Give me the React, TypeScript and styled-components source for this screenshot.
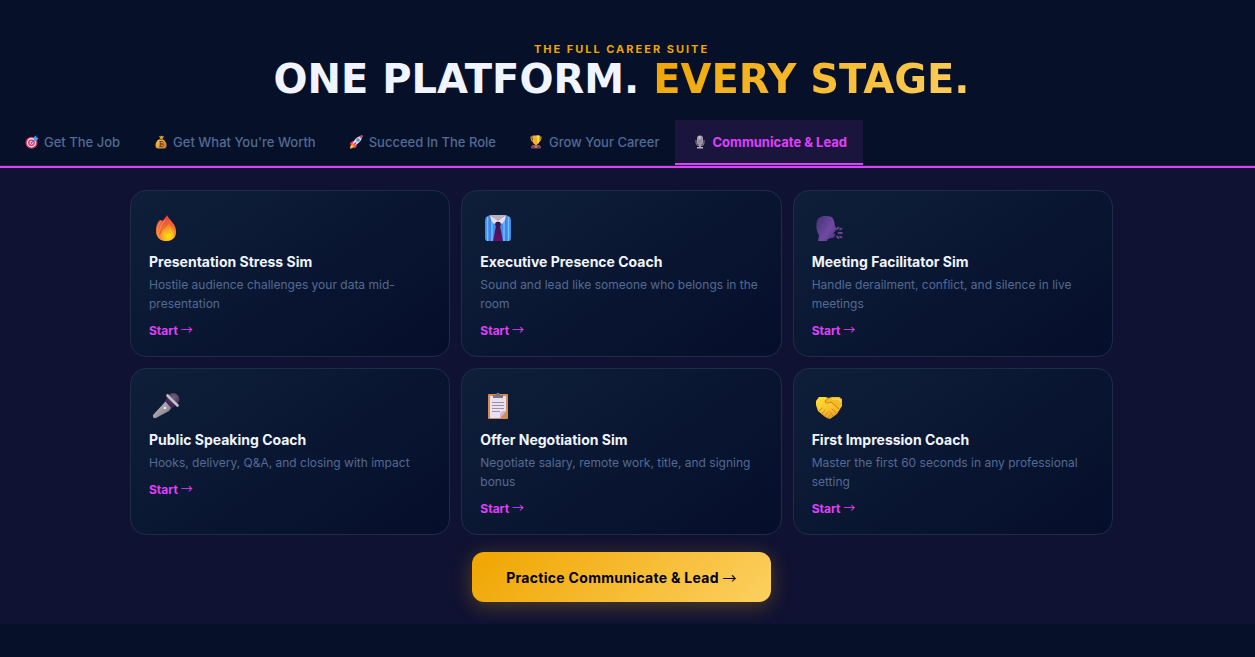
import React, { useState } from "react";
import styled, { createGlobalStyle } from "styled-components";

const GlobalStyle = createGlobalStyle`
  *, *::before, *::after { box-sizing: border-box; }
  body {
    margin: 0;
    background: #061029;
    font-family: Inter, "Liberation Sans", sans-serif;
    color: #f0f4ff;
  }
`;

const Page = styled.main`
  min-height: 100vh;
  padding-bottom: 33px;
`;

const Header = styled.header`
  padding: 42px 12px 0 0;
  text-align: center;
`;

const Eyebrow = styled.p`
  margin: 0;
  font-size: 11px;
  line-height: 14px;
  font-weight: 700;
  letter-spacing: 2px;
  text-transform: uppercase;
  color: #f0a500;
`;

const Heading = styled.h2`
  margin: 0 0 18px;
  font-family: "DejaVu Sans", sans-serif;
  font-size: 40px;
  line-height: 46px;
  font-weight: 700;
  text-transform: uppercase;
  color: #f0f4ff;
`;

const Gold = styled.span`
  background: linear-gradient(135deg, #f0a500, #fcd060);
  background-clip: text;
  -webkit-background-clip: text;
  color: transparent;
`;

const TabBar = styled.nav`
  display: flex;
  padding-left: 7px;
  border-bottom: 1px solid #182543;
`;

const Tab = styled.button<{ $active: boolean }>`
  display: flex;
  align-items: center;
  gap: 4px;
  height: 45px;
  padding: 0 16px;
  border: 0;
  border-bottom: 2px solid ${(p) => (p.$active ? "#e040fb" : "transparent")};
  background: ${(p) => (p.$active ? "#19153c" : "transparent")};
  color: ${(p) => (p.$active ? "#e040fb" : "#526a94")};
  font-family: inherit;
  font-size: 13px;
  line-height: 16px;
  font-weight: ${(p) => (p.$active ? 700 : 500)};
  white-space: nowrap;
  cursor: pointer;
`;

const TabIcon = styled.span`
  display: flex;
  justify-content: center;
  width: 17px;
`;

const Panel = styled.section`
  display: flex;
  flex-direction: column;
  align-items: center;
  gap: 17px;
  padding: 22px 12px 22px 0;
  border-top: 2px solid #e040fb;
  background: #101233;
`;

const Grid = styled.div`
  display: grid;
  grid-template-columns: repeat(3, 1fr);
  gap: 11px;
  width: 100%;
  max-width: 983px;
`;

const Card = styled.article`
  padding: 18px;
  border: 1px solid #1f2c48;
  border-radius: 16px;
  background: linear-gradient(145deg, #0f1f39, #050e2a);
`;

const CardIcon = styled.div`
  display: flex;
  align-items: center;
  justify-content: center;
  width: 35px;
  height: 38px;
  margin-bottom: 6px;
`;

const CardTitle = styled.h3`
  margin: 0 0 4px;
  font-size: 14px;
  line-height: 18px;
  font-weight: 700;
  color: #f0f4ff;
`;

const CardText = styled.p`
  margin: 0 0 10px;
  font-size: 12px;
  line-height: 19px;
  color: #526a94;
`;

const StartLink = styled.a`
  display: block;
  font-size: 12px;
  line-height: 15px;
  font-weight: 700;
  color: #e040fb;
  text-decoration: none;
`;

const Arrow = styled.span`
  font-family: "Noto Sans CJK JP", sans-serif;
  font-weight: 400;
  line-height: 1;
`;

const PracticeButton = styled.button`
  height: 50px;
  padding: 0 34px;
  border: 0;
  border-radius: 12px;
  background: linear-gradient(135deg, #f0a500, #fcd060);
  box-shadow: 0 4px 20px rgba(240, 165, 0, 0.3);
  color: #000;
  font-family: inherit;
  font-size: 14px;
  font-weight: 700;
  letter-spacing: 0.3px;
  cursor: pointer;
`;

type DrawingProps = { size: number; children: React.ReactNode };
const Drawing = ({ size, children }: DrawingProps) => (
  <svg width={size} height={size} viewBox="0 0 28 28" aria-hidden="true">
    {children}
  </svg>
);

const Target = () => (
  <Drawing size={14}>
    <circle cx="13" cy="15.500" r="12" fill="#d92f62" />
    <circle cx="13" cy="15.500" r="9.500" fill="#efdcea" />
    <circle cx="13" cy="15.500" r="6.600" fill="#d92f62" />
    <circle cx="13" cy="15.500" r="4" fill="#efdcea" />
    <circle cx="13" cy="15.500" r="2" fill="#d92f62" />
    <path d="M13 15.500L22 7" stroke="#2d6fc2" strokeWidth="2" />
    <path d="M18 9V4l4-3 1 4 4 1-3 5-5 1z" fill="#42a2f0" />
  </Drawing>
);

const MoneyBag = () => (
  <Drawing size={14}>
    <defs>
      <linearGradient id="bag" x1="0" y1="0" x2="1" y2="1">
        <stop stopColor="#ffd34c" />
        <stop offset="1" stopColor="#c86c2c" />
      </linearGradient>
    </defs>
    <path d="M10 2l3 1 2-2 2 2 3-1-3 6h-4z" fill="#e9a62b" />
    <path d="M11 8h6c6 3 9 9 8 15-1 4-3 4-6 4H8c-4 0-5-3-5-6 0-6 3-10 8-13z" fill="url(#bag)" />
    <path d="M10.500 8.500h7" stroke="#7a4935" strokeWidth="2" />
    <path d="M11 13h5c4 0 3 5 0 5h-4 4c4 0 4 5 0 5h-5M12.500 12v12" fill="none" stroke="#68432f" strokeWidth="2" />
  </Drawing>
);

const Rocket = () => (
  <Drawing size={14}>
    <path d="M10 12c-4 0-7 3-9 7l7-1zM16 18c0 4-2 7-5 9l-2-8z" fill="#ef3c68" />
    <path d="M7 17l5 5c-2 4-6 5-10 5 0-4 1-8 5-10z" fill="#ff8c31" />
    <path d="M5 20l3 3-6 4z" fill="#ffd14b" />
    <path d="M7 18C10 9 17 2 27 1c-1 10-8 17-17 20z" fill="#e6dfed" />
    <path d="M20 3c2-1 5-2 7-2 0 2-1 5-2 7z" fill="#ef3c68" />
    <circle cx="18" cy="10" r="3.400" fill="#316cad" />
    <circle cx="18" cy="10" r="1.800" fill="#66bdf4" />
    <path d="M9 20l5-5" stroke="#cf2c61" strokeWidth="2.500" />
  </Drawing>
);

const Trophy = () => (
  <Drawing size={14}>
    <path d="M8 4H4c0 6 2 9 6 10M20 4h4c0 6-2 9-6 10" fill="none" stroke="#e9a22c" strokeWidth="2.200" />
    <path d="M7 1h14v8c0 6-2 9-5 10v3h-4v-3c-3-1-5-4-5-10z" fill="#f4ae31" />
    <path d="M15 1h6v8c0 4-1 6-3 8z" fill="#ffe04c" />
    <path d="M7 20h14l2 3H5z" fill="#a6524c" />
    <path d="M4 22h20v5H4z" fill="#794268" />
    <path d="M11 23h6v2h-6z" fill="#f1b44a" />
  </Drawing>
);

const StudioMic = () => (
  <Drawing size={14}>
    <path d="M6 10v4c0 10 16 10 16 0v-4" fill="none" stroke="#8d8293" strokeWidth="2.200" />
    <path d="M14 20v5M8 25.500h12" stroke="#b8afbd" strokeWidth="3" />
    <rect x="8" y="1" width="12" height="19" rx="6" fill="#b2aab7" />
    <path d="M9 6h10M8 10h12M8 14h12M12 2v17M16 2v17" stroke="#6f6378" strokeWidth="1" />
    <path d="M11 3c1-1 3-1 4-1v7h-4z" fill="#e0dae2" opacity=".7" />
  </Drawing>
);

const Fire = () => (
  <Drawing size={28}>
    <defs>
      <linearGradient id="flame" x1=".5" y1="0" x2=".6" y2="1">
        <stop stopColor="#ed3e42" />
        <stop offset=".5" stopColor="#f6702f" />
        <stop offset="1" stopColor="#fdb431" />
      </linearGradient>
      <radialGradient id="ember" cx=".65" cy=".75" r=".65">
        <stop stopColor="#ffdf12" />
        <stop offset=".45" stopColor="#fdbd1e" />
        <stop offset="1" stopColor="#f4762e" />
      </radialGradient>
    </defs>
    <path d="M14 1c1 3 3 4 5 7 3 3 4 6 4 10 0 6-4 9-10 9S3 23 3 17c0-4 1-9 4-11 1 0 2 0 3 1 1-3 3-3 4-6z" fill="url(#flame)" />
    <path d="M8 7c-3 4-4 8-3 13M12 6c-4 4-6 9-5 15" stroke="#ff9a65" strokeWidth=".8" fill="none" />
    <path d="M15 9c4 4 6 7 6 11 0 4-3 7-8 7-4 0-8-3-7-8 1-5 5-6 9-10z" fill="url(#ember)" />
    <path d="M15 9c-2 5-7 5-8 11" fill="none" stroke="#d65434" strokeWidth=".8" />
  </Drawing>
);

const ShirtAndTie = () => (
  <Drawing size={28}>
    <defs>
      <linearGradient id="tie" x1="0" y1="0" x2="0" y2="1">
        <stop stopColor="#351642" />
        <stop offset="1" stopColor="#65106c" />
      </linearGradient>
    </defs>
    <path d="M6 1h16l4 2 1 3v18c0 2-1 3-3 3H4c-2 0-3-1-3-3V6l1-3z" fill="#438bed" />
    <path d="M3.500 3v24M24.500 3v24M8 4v23M20 4v23" stroke="#66c7ff" strokeWidth="1.400" />
    <path d="M6 3v24M22 3v24" stroke="#5277e8" strokeWidth="1.200" />
    <path d="M7 1h14l-7 7z" fill="#bab0bf" />
    <path d="M6 1l8 6-4 3-3-4zM22 1l-8 6 4 3 3-4z" fill="#eddced" />
    <path d="M12 8h4l1 3-1 1 3 15H9l3-15-1-1z" fill="url(#tie)" />
  </Drawing>
);

const SpeakingHead = () => (
  <Drawing size={28}>
    <defs>
      <linearGradient id="head" x1="0" y1="0" x2="1" y2=".8">
        <stop stopColor="#463078" />
        <stop offset=".65" stopColor="#704aa2" />
        <stop offset="1" stopColor="#503481" />
      </linearGradient>
    </defs>
    <path d="M2 7c1-4 5-5 9-5 5 0 7 1 8 5l1 5 2 3-2 2v1l-2 1 2 1c0 3-1 4-4 4l-3 1-1 2H3l1-6C1 17 1 11 2 7z" fill="url(#head)" />
    <path d="M22 15l1.500-1.500M25 15.500l1.500-1M23.500 19h3.500M22 22.500l1.500 1.500M25 22.500l1.500 1" stroke="#694394" strokeWidth="1.800" strokeLinecap="round" />
  </Drawing>
);

const HandMic = () => (
  <Drawing size={28}>
    <defs>
      <linearGradient id="handle" x1="0" y1="0" x2="1" y2="1">
        <stop stopColor="#d5d0d6" />
        <stop offset=".5" stopColor="#a29ba4" />
        <stop offset="1" stopColor="#6d6472" />
      </linearGradient>
      <radialGradient id="grille" cx=".6" cy=".3" r=".7">
        <stop stopColor="#72627e" />
        <stop offset="1" stopColor="#352442" />
      </radialGradient>
    </defs>
    <path d="M13 9l6 6-3 4-13 7c-2 1-4-1-3-3z" fill="url(#handle)" />
    <path d="M14 6l8 8-4 2-6-7z" fill="#4f2575" />
    <circle cx="20" cy="7.500" r="6.500" fill="url(#grille)" />
    <path d="M14.500 3.500l10 10" stroke="#c4bfca" strokeWidth="2.600" strokeLinecap="round" />
    <circle cx="12" cy="16" r="1.300" fill="#eee9ef" />
  </Drawing>
);

const Clipboard = () => (
  <Drawing size={28}>
    <rect x="4" y="2" width="20" height="25" rx="1" fill="#d78b50" />
    <path d="M6 4h16v15l-6 7H6z" fill="#e9e0f1" />
    <path d="M22 19l-6 7v-5l3-2z" fill="#c9bad7" />
    <path d="M8 10.500h12M8 13.500h12M8 16.500h12M8 19.500h8" stroke="#96879f" strokeWidth=".9" />
    <path d="M9 3h3c0-3 4-3 4 0h3v3H9z" fill="#80717e" />
  </Drawing>
);

const Handshake = () => (
  <Drawing size={28}>
    <defs>
      <linearGradient id="hands" x1=".2" y1="0" x2=".6" y2="1">
        <stop stopColor="#ffdf35" />
        <stop offset=".6" stopColor="#fac02a" />
        <stop offset="1" stopColor="#e79a2d" />
      </linearGradient>
    </defs>
    <path d="M4 5h6l4 1 4-1h6l3 4v5l-5 8-7 5-3-1-3-2-6-5-2-6V9z" fill="url(#hands)" />
    <path d="M14 6l-4 3c0 3 4 2 6 1l8 7 3-6V7l-3-2h-6z" fill="#f6ba27" />
    <path d="M14 6l-4 3c0 3 4 2 6 1l8 7" fill="none" stroke="#c87e22" strokeWidth="1" />
    <path d="M4 19l3-3M7 22l3-4M10 24l3-4M13 26l2-3M17 17l4 4M15 20l3 4" stroke="#c98625" strokeWidth=".9" strokeLinecap="round" />
    <path d="M17 7h7l2 3" fill="none" stroke="#ffe765" strokeWidth="1" />
  </Drawing>
);

const tabs = [
  { label: "Get The Job", Icon: Target },
  { label: "Get What You're Worth", Icon: MoneyBag },
  { label: "Succeed In The Role", Icon: Rocket },
  { label: "Grow Your Career", Icon: Trophy },
  { label: "Communicate & Lead", Icon: StudioMic },
];

const tools = [
  { title: "Presentation Stress Sim", text: "Hostile audience challenges your data mid-presentation", Icon: Fire },
  { title: "Executive Presence Coach", text: "Sound and lead like someone who belongs in the room", Icon: ShirtAndTie },
  { title: "Meeting Facilitator Sim", text: "Handle derailment, conflict, and silence in live meetings", Icon: SpeakingHead },
  { title: "Public Speaking Coach", text: "Hooks, delivery, Q&A, and closing with impact", Icon: HandMic },
  { title: "Offer Negotiation Sim", text: "Negotiate salary, remote work, title, and signing bonus", Icon: Clipboard },
  { title: "First Impression Coach", text: "Master the first 60 seconds in any professional setting", Icon: Handshake },
];

export default function App() {
  const [active, setActive] = useState(4);
  return (
    <Page>
      <GlobalStyle />
      <Header>
        <Eyebrow>The Full Career Suite</Eyebrow>
        <Heading>
          One Platform. <Gold>Every Stage.</Gold>
        </Heading>
      </Header>
      <TabBar>
        {tabs.map(({ label, Icon }, i) => (
          <Tab key={label} type="button" $active={i === active} onClick={() => setActive(i)}>
            <TabIcon><Icon /></TabIcon>
            {label}
          </Tab>
        ))}
      </TabBar>
      <Panel>
        <Grid>
          {tools.map(({ title, text, Icon }) => (
            <Card key={title}>
              <CardIcon><Icon /></CardIcon>
              <CardTitle>{title}</CardTitle>
              <CardText>{text}</CardText>
              <StartLink href="#start">Start <Arrow>→</Arrow></StartLink>
            </Card>
          ))}
        </Grid>
        <PracticeButton type="button">
          Practice Communicate &amp; Lead <Arrow>→</Arrow>
        </PracticeButton>
      </Panel>
    </Page>
  );
}
